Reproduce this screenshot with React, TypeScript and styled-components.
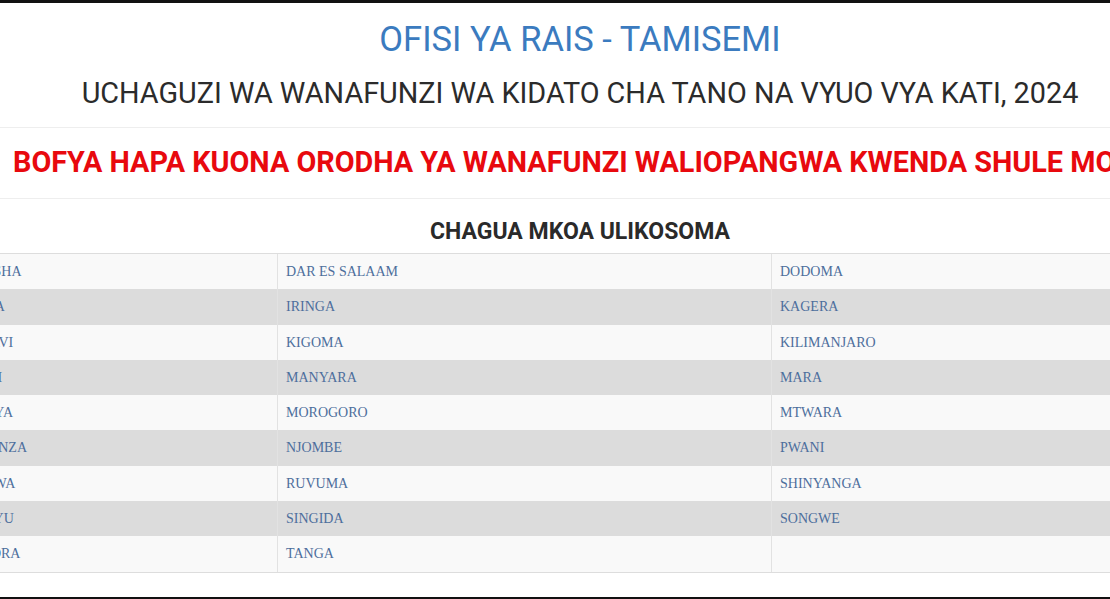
import styled, { createGlobalStyle } from "styled-components";

const Global = createGlobalStyle`
  html, body {
    margin: 0;
    padding: 0;
    background: #fff;
    overflow: hidden;
  }
`;

const Frame = styled.div`
  width: 1110px;
  height: 599px;
  box-sizing: border-box;
  border-top: 3px solid #111;
  border-bottom: 2px solid #111;
  overflow: hidden;
  background: #fff;
`;

const Page = styled.div`
  width: 1248px;
  margin-left: -44px;
`;

const Title = styled.h1`
  margin: 0;
  padding-top: 16px;
  text-align: center;
  font-family: Roboto, "Liberation Sans", sans-serif;
  font-weight: 400;
  font-size: 34.5px;
  line-height: 40px;
  color: #3b7bbf;
`;

const SubTitle = styled.h2`
  margin: 0;
  padding: 17px 0 17px;
  text-align: center;
  font-family: Roboto, "Liberation Sans", sans-serif;
  font-weight: 400;
  font-size: 28.8px;
  line-height: 34px;
  color: #2b2b2b;
  border-bottom: 1px solid #eee;
`;

const Banner = styled.a`
  display: block;
  padding: 16px 0 18px 57px;
  white-space: nowrap;
  font-family: Roboto, "Liberation Sans", sans-serif;
  font-weight: 700;
  font-size: 28.8px;
  line-height: 36px;
  color: #e8090e;
  text-decoration: none;
  border-bottom: 1px solid #eee;
`;

const Heading = styled.h3`
  margin: 0;
  padding: 19px 0 7px;
  text-align: center;
  font-family: Roboto, "Liberation Sans", sans-serif;
  font-weight: 700;
  font-size: 23px;
  line-height: 28px;
  color: #2a2a2a;
`;

const Table = styled.div`
  display: grid;
  grid-template-columns: 321px 494px 1fr;
  border-top: 1px solid #ddd;
  border-bottom: 1px solid #ddd;
`;

const Cell = styled.a<{ $shade: boolean; $first: boolean }>`
  display: block;
  height: 35.3px;
  box-sizing: border-box;
  padding: 0 8px;
  line-height: 35px;
  font-family: "Liberation Serif", "DejaVu Serif", serif;
  font-size: 14px;
  color: #4d6e9c;
  text-decoration: none;
  background: ${(p) => (p.$shade ? "#dcdcdc" : "#f9f9f9")};
  border-left: ${(p) => (p.$first ? "none" : "1px solid #e2e2e2")};
  white-space: nowrap;
`;

const rows: string[][] = [
  ["ARUSHA", "DAR ES SALAAM", "DODOMA"],
  ["GEITA", "IRINGA", "KAGERA"],
  ["KATAVI", "KIGOMA", "KILIMANJARO"],
  ["LINDI", "MANYARA", "MARA"],
  ["MBEYA", "MOROGORO", "MTWARA"],
  ["MWANZA", "NJOMBE", "PWANI"],
  ["RUKWA", "RUVUMA", "SHINYANGA"],
  ["SIMIYU", "SINGIDA", "SONGWE"],
  ["TABORA", "TANGA", ""],
];

export default function App() {
  return (
    <>
      <Global />
      <Frame>
        <Page>
          <Title>OFISI YA RAIS - TAMISEMI</Title>
          <SubTitle>
            UCHAGUZI WA WANAFUNZI WA KIDATO CHA TANO NA VYUO VYA KATI, 2024
          </SubTitle>
          <Banner href="#">
            BOFYA HAPA KUONA ORODHA YA WANAFUNZI WALIOPANGWA KWENDA SHULE MOJA
            KWA MOJA
          </Banner>
          <Heading>CHAGUA MKOA ULIKOSOMA</Heading>
          <Table>
            {rows.map((row, r) =>
              row.map((name, c) => (
                <Cell
                  key={`${r}-${c}`}
                  href="#"
                  $shade={r % 2 === 1}
                  $first={c === 0}
                >
                  {name}
                </Cell>
              ))
            )}
          </Table>
        </Page>
      </Frame>
    </>
  );
}
